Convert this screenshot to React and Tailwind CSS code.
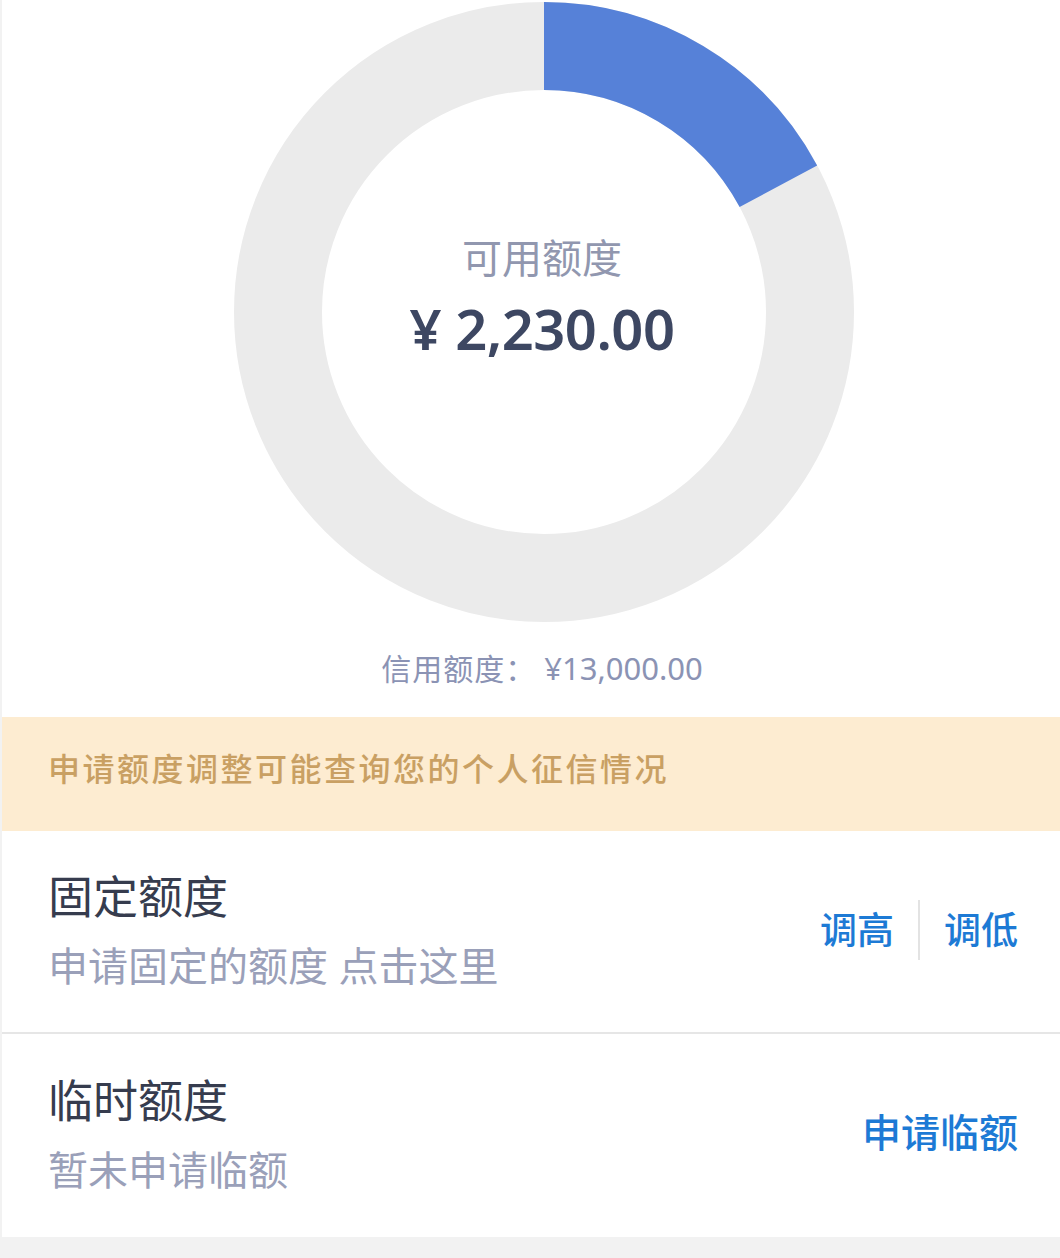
import React from 'react';

const FONT = '"Noto Sans", "Noto Sans CJK SC", sans-serif';

const total = 13000;
const available = 2230;

const Donut = () => {
    const r = 266;
    const c = 2 * Math.PI * r;
    const used = (available / total) * c;
    return (
        <div className="relative w-[620px] h-[620px]">
            <svg width="620" height="620" viewBox="0 0 620 620" className="block">
                <circle cx="310" cy="310" r={r} fill="none" stroke="#ebebeb" strokeWidth="88" />
                <circle
                    cx="310"
                    cy="310"
                    r={r}
                    fill="none"
                    stroke="#5681d8"
                    strokeWidth="88"
                    strokeDasharray={`${used} ${c}`}
                    transform="rotate(-90 310 310)"
                />
            </svg>
            <div className="absolute inset-0 flex flex-col items-center justify-center pb-[30px] pr-[4px]">
                <div className="text-[40px] leading-none text-[#9197af]">可用额度</div>
                <div className="mt-[22px] text-[56px] leading-none font-semibold text-[#3d4762] tracking-[-0.5px]">¥ 2,230.00</div>
            </div>
        </div>
    );
};

const Row = ({ title, desc, children, border }) => (
    <div className={`flex items-center justify-between pl-[46px] pr-[42px] h-[203px] ${border ? 'border-b-2 border-[#e6e6e6]' : ''}`}>
        <div className="flex flex-col pb-[4px]">
            <div className="text-[45px] leading-none text-[#363c4e]">{title}</div>
            <div className="mt-[27px] text-[40px] leading-none text-[#9aa0b9]">{desc}</div>
        </div>
        <div className="flex items-center pb-[4px]">{children}</div>
    </div>
);

const App = () => {
    return (
        <div className="w-[1060px] h-[1258px] bg-white border-l-2 border-[#f2f2f2] overflow-hidden" style={{ fontFamily: FONT }}>
            <div className="flex flex-col items-center pt-[2px]">
                <div className="ml-[26px]">
                    <Donut />
                </div>
                <div className="mt-[31px] text-[30px] leading-none text-[#8b93b4] ml-[22px] flex items-center">
                    <span className="tracking-[1px]">信用额度：</span>
                    <span className="ml-[8px] text-[31px]">¥13,000.00</span>
                </div>
            </div>
            <div className="mt-[33px] h-[114px] bg-[#fdecd1] flex items-center pl-[46px] pb-[10px]">
                <span className="text-[32px] font-medium text-[#c9a063] tracking-[2.5px]">申请额度调整可能查询您的个人征信情况</span>
            </div>
            <Row title="固定额度" desc="申请固定的额度 点击这里" border>
                <span className="text-[37px] font-medium text-[#1d7ad5]">调高</span>
                <span className="mx-[24px] w-[2px] h-[60px] bg-[#e3e3e3]" />
                <span className="text-[37px] font-medium text-[#1d7ad5]">调低</span>
            </Row>
            <Row title="临时额度" desc="暂未申请临额">
                <span className="text-[39px] font-medium text-[#1d7ad5] mb-[2px]">申请临额</span>
            </Row>
            <div className="h-[30px] bg-[#f2f2f2]" />
        </div>
    );
};

export default App;
